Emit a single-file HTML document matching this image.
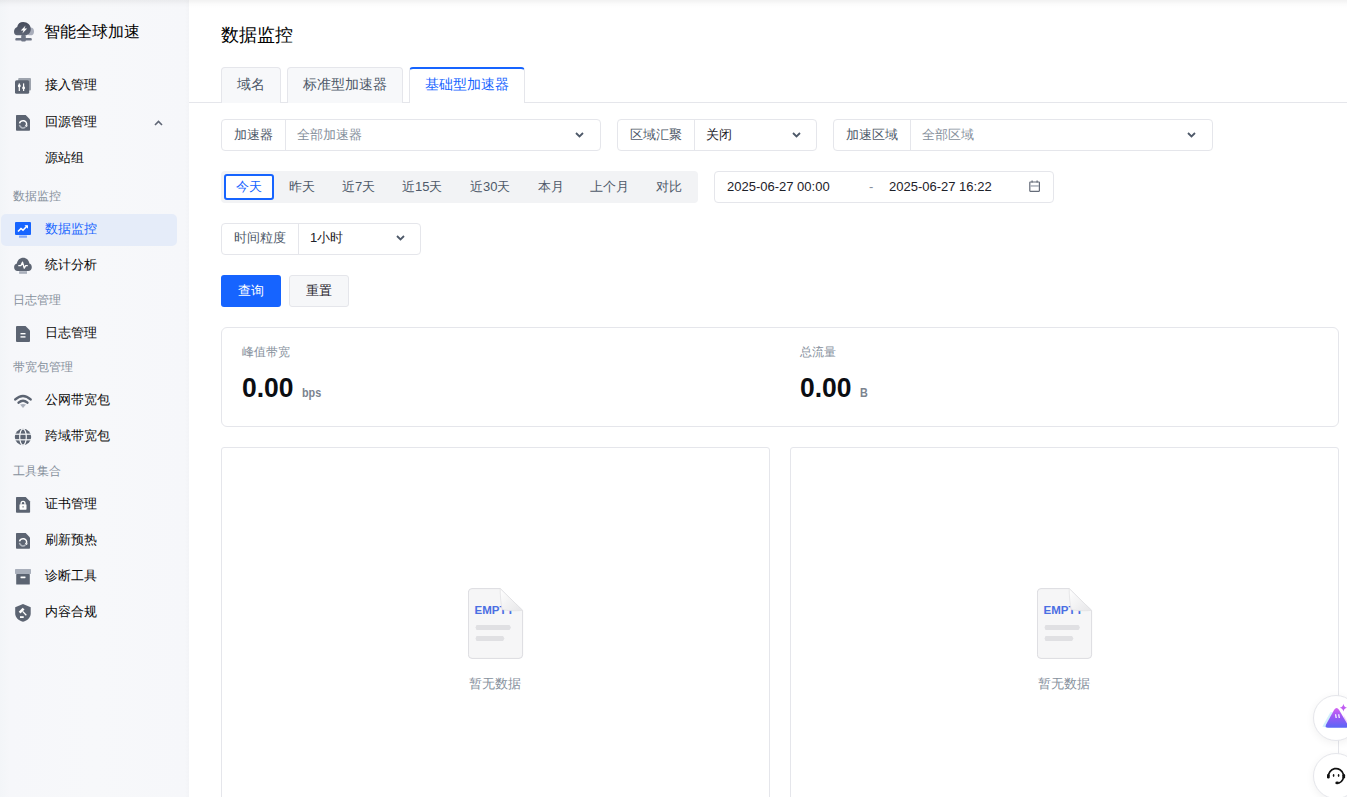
<!DOCTYPE html>
<html><head><meta charset="utf-8">
<style>
*{box-sizing:border-box;margin:0;padding:0}
html,body{width:1347px;height:797px;overflow:hidden;background:#fff}
body{position:relative;font-family:"Liberation Sans",sans-serif;color:#1d2129;font-size:14px}
.a{position:absolute;white-space:nowrap}
#side{position:absolute;left:0;top:0;width:189px;height:797px;background:linear-gradient(90deg,#f3f5f8 0,#f6f7fa 10px,#f7f8fa 50%,#f6f7fa 185px,#f3f4f7 189px)}
#topsh{position:absolute;left:0;top:0;width:1347px;height:8px;background:linear-gradient(rgba(0,0,0,.05) 0px,rgba(0,0,0,.035) 2px,rgba(0,0,0,.015) 4px,rgba(0,0,0,.006) 6px,rgba(0,0,0,0) 8px);z-index:5}
.ic{position:absolute}
.mi{position:absolute;left:45px;font-size:13px;line-height:20px;color:#0a0a0a}
.gl{position:absolute;left:13px;font-size:12px;line-height:16px;color:#86909c}
.box{position:absolute;border:1px solid #e5e6eb;border-radius:4px;background:#fff}
.lbl{position:absolute;top:0;bottom:0;border-right:1px solid #e5e6eb}
.t14{font-size:14px;line-height:20px}
.t13{font-size:13px;line-height:20px}
.chev{position:absolute;width:9px;height:6px}
.card{position:absolute;border:1px solid #e5e6eb;border-radius:4px;background:#fff}
</style></head><body>
<div id="side">
  <!-- logo -->
  <svg class="ic" style="left:10px;top:18px" width="28" height="28" viewBox="10 18 28 28">
    <defs><linearGradient id="lg1" x1="0" y1="0" x2="0" y2="1"><stop offset="0" stop-color="#464c5b"/><stop offset="1" stop-color="#5f6676"/></linearGradient></defs>
    <ellipse cx="30.4" cy="31.4" rx="3.6" ry="3.9" fill="#a9aebb"/>
    <path d="M17 35.3 C15.2 35.3 14 33.8 14 31.8 C14 29.6 15.2 27.6 17.2 27 C17.6 23.8 20 21.9 23.2 21.9 C27.5 21.9 30.8 24.8 30.8 29 C30.8 32.6 28.5 35.3 25.2 35.3 Z" fill="url(#lg1)"/>
    <path d="M25.6 25.5 L20.8 30.5 L23.5 30.5 L22.4 33.5 L27.1 28.4 L24.4 28.4 Z" fill="#fff"/>
    <rect x="15.3" y="38.1" width="16.5" height="2.5" rx="1.2" fill="#6e7585"/>
    <rect x="21.2" y="35" width="4.6" height="6.6" rx="1" fill="#6e7585"/>
  </svg>
  <div class="a" style="left:44px;top:21px;font-size:16px;line-height:22px;color:#000">智能全球加速</div>

  <!-- 接入管理 -->
  <svg class="ic" style="left:14px;top:77px" width="18" height="18" viewBox="14 77 18 18">
    <rect x="18.2" y="78" width="12.8" height="12.6" rx="1" fill="#9ea4ae"/>
    <rect x="15" y="80.2" width="14.2" height="13.6" rx="1.6" fill="#5c6472"/>
    <rect x="18.7" y="83.4" width="1.2" height="7.6" fill="#fff"/><rect x="17.9" y="84.6" width="2.8" height="2.6" rx="1.2" fill="#fff"/>
    <rect x="23" y="83.4" width="1.2" height="7.6" fill="#fff"/><rect x="22.2" y="86.6" width="2.8" height="2.6" rx="1.2" fill="#fff"/>
  </svg>
  <div class="mi" style="top:75px">接入管理</div>

  <!-- 回源管理 -->
  <svg class="ic" style="left:10px;top:108px" width="26" height="26" viewBox="10 108 26 26">
    <path d="M16.8 115 H25.7 L30 119.4 V130 a0.8 0.8 0 0 1 -0.8 0.8 H16.8 a0.8 0.8 0 0 1 -0.8 -0.8 V115.8 a0.8 0.8 0 0 1 0.8 -0.8Z" fill="#5c6472"/>
    <path d="M19.52 123.37 A3.6 3.6 0 0 1 26.48 125.23" stroke="#fff" stroke-width="1.5" fill="none"/>
    <path d="M28.02 125.65 L25.96 127.16 L24.93 124.82Z" fill="#fff"/>
    <path d="M19.45 124.93 A3.6 3.6 0 0 0 25.31 127.06" stroke="#b3b8c1" stroke-width="1.5" fill="none"/>
  </svg>
  <div class="mi" style="top:112px">回源管理</div>
  <svg class="ic" style="left:154px;top:120px" width="9" height="6" viewBox="0 0 9 6"><path d="M1 5 L4.5 1.5 L8 5" stroke="#5f6675" stroke-width="1.6" fill="none"/></svg>
  <div class="mi" style="top:148px">源站组</div>

  <div class="gl" style="top:188px">数据监控</div>
  <div class="a" style="left:1px;top:214px;width:176px;height:32px;border-radius:5px;background:#e5ecf9"></div>
  <svg class="ic" style="left:15px;top:222px" width="17" height="16" viewBox="0 0 17 16">
    <rect x="0" y="0" width="16" height="13" rx="1" fill="#1664ff"/>
    <rect x="4" y="13.4" width="8" height="2.4" rx="0.5" fill="#7fa6fb"/>
    <path d="M3 9.5 L6 6.5 L8 8.2 L12 4" stroke="#fff" stroke-width="1.6" fill="none"/>
    <path d="M9.5 3.2 H13 V6.7Z" fill="#fff"/>
  </svg>
  <div class="mi" style="top:219px;color:#1664ff">数据监控</div>

  <svg class="ic" style="left:10px;top:252px" width="26" height="26" viewBox="10 252 26 26">
    <path d="M17.5 270.9 C15.5 270.9 14.1 269.3 14.1 267.2 C14.1 265.3 15.3 263.8 16.9 263.5 C17.3 260.1 20 257.7 23.2 257.7 C26.4 257.7 29 260.1 29.4 263.5 C30.9 263.9 31.8 265.4 31.8 267.2 C31.8 269.3 30.3 270.9 28.3 270.9 Z" fill="#5c6472"/>
    <path d="M18.3 265.6 H21 L22.5 262.2 L24.3 268.2 L25.6 265.6 H27.8" stroke="#fff" stroke-width="1.3" stroke-linejoin="round" fill="none"/>
    <rect x="19.1" y="271.2" width="7.9" height="2.6" fill="#a9afbb"/>
  </svg>
  <div class="mi" style="top:255px">统计分析</div>

  <div class="gl" style="top:292px">日志管理</div>
  <svg class="ic" style="left:16px;top:326px" width="15" height="16" viewBox="0 0 15 16">
    <path d="M1 0 H9.5 L14 4.5 V15 a1 1 0 0 1 -1 1 H1 a1 1 0 0 1 -1 -1 V1 a1 1 0 0 1 1 -1Z" fill="#5c6472"/>
    <rect x="4.5" y="7" width="5" height="1.4" fill="#fff"/><rect x="4.5" y="10.2" width="5" height="1.4" fill="#fff"/>
  </svg>
  <div class="mi" style="top:323px">日志管理</div>

  <div class="gl" style="top:359px">带宽包管理</div>
  <svg class="ic" style="left:10px;top:388px" width="26" height="26" viewBox="10 388 26 26">
    <path d="M15.3 399.4 Q23 392.6 30.6 399.4" stroke="#5c6472" stroke-width="2.6" fill="none" stroke-linecap="round"/>
    <path d="M18.6 402.6 Q23 398.8 27.4 402.6" stroke="#5c6472" stroke-width="2.5" fill="none" stroke-linecap="round"/>
    <path d="M20.1 404.6 Q23 403.2 26 404.6 L23 408.1 Z" fill="#a9afbb"/>
  </svg>
  <div class="mi" style="top:390px">公网带宽包</div>

  <svg class="ic" style="left:14px;top:428px" width="18" height="18" viewBox="0 0 18 18">
    <circle cx="9" cy="9" r="8.2" fill="#5c6472"/>
    <ellipse cx="9" cy="9" rx="3.3" ry="8.2" fill="none" stroke="#f6f7f9" stroke-width="1.2"/>
    <rect x="0" y="5.6" width="18" height="1.2" fill="#f6f7f9"/><rect x="0" y="11.2" width="18" height="1.2" fill="#f6f7f9"/>
  </svg>
  <div class="mi" style="top:426px">跨域带宽包</div>

  <div class="gl" style="top:463px">工具集合</div>
  <svg class="ic" style="left:10px;top:490px" width="26" height="26" viewBox="10 490 26 26">
    <path d="M16.8 497 H25.7 L30.1 501.4 V511.9 a0.8 0.8 0 0 1 -0.8 0.8 H16.8 a0.8 0.8 0 0 1 -0.8 -0.8 V497.8 a0.8 0.8 0 0 1 0.8 -0.8Z" fill="#5c6472"/>
    <rect x="19.5" y="504.3" width="7" height="5.4" rx="0.6" fill="#fff"/>
    <path d="M21.1 504.6 V503.4 A1.95 1.95 0 0 1 25 503.4 V504.6" stroke="#fff" stroke-width="1.3" fill="none"/>
    <rect x="22.6" y="506" width="0.9" height="1.6" fill="#5c6472"/>
  </svg>
  <div class="mi" style="top:494px">证书管理</div>

  <svg class="ic" style="left:10px;top:526px" width="26" height="26" viewBox="10 108 26 26">
    <path d="M16.8 115 H25.7 L30 119.4 V130 a0.8 0.8 0 0 1 -0.8 0.8 H16.8 a0.8 0.8 0 0 1 -0.8 -0.8 V115.8 a0.8 0.8 0 0 1 0.8 -0.8Z" fill="#5c6472"/>
    <path d="M19.52 123.37 A3.6 3.6 0 0 1 26.48 125.23" stroke="#fff" stroke-width="1.5" fill="none"/>
    <path d="M28.02 125.65 L25.96 127.16 L24.93 124.82Z" fill="#fff"/>
    <path d="M19.45 124.93 A3.6 3.6 0 0 0 25.31 127.06" stroke="#b3b8c1" stroke-width="1.5" fill="none"/>
  </svg>
  <div class="mi" style="top:530px">刷新预热</div>

  <svg class="ic" style="left:15px;top:569px" width="17" height="16" viewBox="0 0 17 16">
    <rect x="0" y="0" width="16" height="4.9" rx="0.6" fill="#a9afbb"/>
    <rect x="1.2" y="5.1" width="13.6" height="10.5" rx="0.6" fill="#5c6472"/>
    <rect x="5.5" y="7.4" width="5" height="1.8" rx="0.4" fill="#fff"/>
  </svg>
  <div class="mi" style="top:566px">诊断工具</div>

  <svg class="ic" style="left:10px;top:600px" width="26" height="26" viewBox="10 600 26 26">
    <path d="M23 604.1 L30.7 607.2 V613.5 C30.7 617.5 27.5 620.5 23 621.7 C18.5 620.5 15.2 617.5 15.2 613.5 V607.2 Z" fill="#5c6472"/>
    <path d="M19.6 612.6 L23.6 608.6" stroke="#fff" stroke-width="2.6" fill="none"/>
    <path d="M22.6 611.4 L26.3 615.2" stroke="#fff" stroke-width="1.3" fill="none"/>
    <rect x="20" y="616.2" width="3.7" height="1.8" fill="#fff"/>
  </svg>
  <div class="mi" style="top:602px">内容合规</div>
</div>
<div id="topsh"></div>

<!-- main -->
<div class="a" style="left:221px;top:22px;font-size:18px;line-height:26px;color:#000">数据监控</div>

<!-- tabs -->
<div class="a" style="left:189px;top:102px;width:1158px;height:1px;background:#e5e6eb"></div>
<div class="a" style="left:221px;top:67px;width:60px;height:36px;background:#f7f8fa;border:1px solid #e5e6eb;border-bottom:none;border-radius:4px 4px 0 0"></div>
<div class="a t14" style="left:237px;top:74px;color:#4e5969">域名</div>
<div class="a" style="left:287px;top:67px;width:116px;height:36px;background:#f7f8fa;border:1px solid #e5e6eb;border-bottom:none;border-radius:4px 4px 0 0"></div>
<div class="a t14" style="left:303px;top:74px;color:#4e5969">标准型加速器</div>
<div class="a" style="left:409px;top:67px;width:116px;height:36px;background:#fff;border:1px solid #e5e6eb;border-top:2px solid #1664ff;border-bottom:none;border-radius:4px 4px 0 0"></div>
<div class="a t14" style="left:425px;top:74px;color:#1664ff">基础型加速器</div>

<!-- selectors row -->
<div class="box" style="left:221px;top:119px;width:380px;height:32px">
  <div class="lbl" style="left:0;width:64px"></div>
</div>
<div class="a t13" style="left:234px;top:125px;color:#4e5969">加速器</div>
<div class="a t13" style="left:297px;top:125px;color:#86909c">全部加速器</div>
<svg class="chev" style="left:575px;top:132px" viewBox="0 0 9 6"><path d="M1 1 L4.5 4.5 L8 1" stroke="#4e5969" stroke-width="1.8" fill="none"/></svg>

<div class="box" style="left:617px;top:119px;width:200px;height:32px">
  <div class="lbl" style="left:0;width:77px"></div>
</div>
<div class="a t13" style="left:630px;top:125px;color:#4e5969">区域汇聚</div>
<div class="a t13" style="left:706px;top:125px;color:#1d2129">关闭</div>
<svg class="chev" style="left:792px;top:132px" viewBox="0 0 9 6"><path d="M1 1 L4.5 4.5 L8 1" stroke="#4e5969" stroke-width="1.8" fill="none"/></svg>

<div class="box" style="left:833px;top:119px;width:380px;height:32px">
  <div class="lbl" style="left:0;width:77px"></div>
</div>
<div class="a t13" style="left:846px;top:125px;color:#4e5969">加速区域</div>
<div class="a t13" style="left:922px;top:125px;color:#86909c">全部区域</div>
<svg class="chev" style="left:1187px;top:132px" viewBox="0 0 9 6"><path d="M1 1 L4.5 4.5 L8 1" stroke="#4e5969" stroke-width="1.8" fill="none"/></svg>

<!-- time buttons -->
<div class="a" style="left:221px;top:171px;width:477px;height:32px;background:#f2f3f5;border-radius:4px"></div>
<div class="a" style="left:224px;top:174px;width:50px;height:26px;background:#fff;border:2px solid #1664ff;border-radius:3px"></div>
<div class="a t13" style="left:236px;top:177px;color:#1664ff">今天</div>
<div class="a t13" style="left:289px;top:177px;color:#4e5969">昨天</div>
<div class="a t13" style="left:342px;top:177px;color:#4e5969">近7天</div>
<div class="a t13" style="left:402px;top:177px;color:#4e5969">近15天</div>
<div class="a t13" style="left:470px;top:177px;color:#4e5969">近30天</div>
<div class="a t13" style="left:538px;top:177px;color:#4e5969">本月</div>
<div class="a t13" style="left:590px;top:177px;color:#4e5969">上个月</div>
<div class="a t13" style="left:656px;top:177px;color:#4e5969">对比</div>

<!-- date range -->
<div class="box" style="left:714px;top:171px;width:340px;height:32px"></div>
<div class="a" style="left:727px;top:178px;font-size:13px;line-height:17px;color:#1d2129">2025-06-27 00:00</div>
<div class="a" style="left:869px;top:178px;font-size:13px;line-height:17px;color:#86909c">-</div>
<div class="a" style="left:889px;top:178px;font-size:13px;line-height:17px;color:#1d2129">2025-06-27 16:22</div>
<svg class="ic" style="left:1026px;top:178px" width="17" height="17" viewBox="1026 178 17 17"><rect x="1029.8" y="182" width="9.6" height="9.3" rx="0.5" fill="none" stroke="#656c79" stroke-width="1.2"/><rect x="1030.2" y="185.2" width="8.8" height="1.5" fill="#a9aeb8"/><path d="M1032.1 180.6 V182.6 M1037.1 180.6 V182.6" stroke="#656c79" stroke-width="1.2"/></svg>

<!-- granularity -->
<div class="box" style="left:221px;top:223px;width:200px;height:32px">
  <div class="lbl" style="left:0;width:77px"></div>
</div>
<div class="a t13" style="left:234px;top:228px;color:#4e5969">时间粒度</div>
<div class="a t13" style="left:310px;top:228px;color:#1d2129">1小时</div>
<svg class="chev" style="left:396px;top:235px" viewBox="0 0 9 6"><path d="M1 1 L4.5 4.5 L8 1" stroke="#4e5969" stroke-width="1.8" fill="none"/></svg>

<!-- buttons -->
<div class="a" style="left:221px;top:275px;width:60px;height:32px;background:#1664ff;border-radius:3px"></div>
<div class="a t13" style="left:238px;top:281px;color:#fff">查询</div>
<div class="a" style="left:289px;top:275px;width:60px;height:32px;background:#f6f7f9;border:1px solid #e5e6eb;border-radius:3px"></div>
<div class="a t13" style="left:306px;top:281px;color:#1d2129">重置</div>

<!-- stat card -->
<div class="card" style="left:221px;top:327px;width:1118px;height:100px;border-radius:6px"></div>
<div class="a" style="left:242px;top:344px;font-size:12px;line-height:16px;color:#86909c">峰值带宽</div>
<div class="a" style="left:242px;top:372px;font-size:28px;line-height:32px;font-weight:bold;color:#0b0d12;transform:scaleX(.945);transform-origin:0 0">0.00</div><div class="a" style="left:302px;top:385px;font-size:12px;line-height:16px;font-weight:bold;color:#7b838f;transform:scaleX(.9);transform-origin:0 0">bps</div>
<div class="a" style="left:800px;top:344px;font-size:12px;line-height:16px;color:#86909c">总流量</div>
<div class="a" style="left:800px;top:372px;font-size:28px;line-height:32px;font-weight:bold;color:#0b0d12;transform:scaleX(.945);transform-origin:0 0">0.00</div><div class="a" style="left:860px;top:385px;font-size:12px;line-height:16px;font-weight:bold;color:#7b838f;transform:scaleX(.9);transform-origin:0 0">B</div>

<!-- chart cards -->
<div class="card" style="left:221px;top:447px;width:549px;height:400px;border-radius:3px"></div>
<div class="card" style="left:790px;top:447px;width:549px;height:400px;border-radius:3px"></div>

<!-- empty states -->
<svg class="ic" style="left:468px;top:588px" width="57" height="73" viewBox="0 0 57 73">
  <defs><linearGradient id="fold1" x1="0" y1="0" x2="1" y2="1"><stop offset="0" stop-color="#ffffff"/><stop offset="1" stop-color="#e6e6e8"/></linearGradient></defs>
  <path d="M4 0.6 H32.2 L54.6 22.4 V66.8 a3.6 3.6 0 0 1 -3.6 3.6 H4 a3.6 3.6 0 0 1 -3.6 -3.6 V4 a3.6 3.6 0 0 1 3.6 -3.4Z" fill="#f6f6f7" stroke="#dcdce0" stroke-width="1"/>
  <text x="6.5" y="26" font-family="Liberation Sans" font-weight="bold" font-size="11.5" fill="#4a6fe3">EMPTY</text>
  <path d="M32.2 0.6 L54.6 22.4 C47 23 39 23 34.2 21.4 C32.7 14.5 32.2 7.5 32.2 0.6Z" fill="url(#fold1)" stroke="#e2e2e5" stroke-width="0.8"/>
  <path d="M8.5 37 H41.5 L43 39.5 L41.5 42 H8.5 L7.5 39.5Z" fill="#e0e0e3"/>
  <path d="M8.5 48 H35 L36.5 50.5 L35 53 H8.5 L7.5 50.5Z" fill="#e0e0e3"/>
</svg>
<div class="a" style="left:469px;top:675px;font-size:13px;line-height:18px;color:#86909c">暂无数据</div>
<svg class="ic" style="left:1037px;top:588px" width="57" height="73" viewBox="0 0 57 73">
  <defs><linearGradient id="fold2" x1="0" y1="0" x2="1" y2="1"><stop offset="0" stop-color="#ffffff"/><stop offset="1" stop-color="#e6e6e8"/></linearGradient></defs>
  <path d="M4 0.6 H32.2 L54.6 22.4 V66.8 a3.6 3.6 0 0 1 -3.6 3.6 H4 a3.6 3.6 0 0 1 -3.6 -3.6 V4 a3.6 3.6 0 0 1 3.6 -3.4Z" fill="#f6f6f7" stroke="#dcdce0" stroke-width="1"/>
  <text x="6.5" y="26" font-family="Liberation Sans" font-weight="bold" font-size="11.5" fill="#4a6fe3">EMPTY</text>
  <path d="M32.2 0.6 L54.6 22.4 C47 23 39 23 34.2 21.4 C32.7 14.5 32.2 7.5 32.2 0.6Z" fill="url(#fold2)" stroke="#e2e2e5" stroke-width="0.8"/>
  <path d="M8.5 37 H41.5 L43 39.5 L41.5 42 H8.5 L7.5 39.5Z" fill="#e0e0e3"/>
  <path d="M8.5 48 H35 L36.5 50.5 L35 53 H8.5 L7.5 50.5Z" fill="#e0e0e3"/>
</svg>
<div class="a" style="left:1038px;top:675px;font-size:13px;line-height:18px;color:#86909c">暂无数据</div>
<!-- floating buttons -->
<div class="a" style="left:1313px;top:695px;width:46px;height:46px;border-radius:50%;background:#fff;border:1px solid #e5e6eb;box-shadow:0 2px 8px rgba(0,0,0,0.06)"></div>
<svg class="ic" style="left:1320px;top:702px" width="27" height="28" viewBox="1320 702 27 28">
  <defs><linearGradient id="mt" x1="0" y1="0" x2="0" y2="1"><stop offset="0" stop-color="#d464f2"/><stop offset=".45" stop-color="#9a58f5"/><stop offset="1" stop-color="#5a66f5"/></linearGradient></defs>
  <path d="M1322.4 726.4 L1330.6 712 L1333.4 712.5 L1326 727.6Z" fill="#c6ebfb" opacity=".8"/>
  <path d="M1343.5 715 L1350 726 L1345 727Z" fill="#f0c8f8" opacity=".8"/>
  <path d="M1326.1 724.6 L1334.2 709.8 Q1336.6 706.2 1339 709.8 L1347.6 724.6 Q1349 727.7 1345.6 727.7 H1328.1 Q1324.7 727.7 1326.1 724.6Z" fill="url(#mt)"/>
  <path d="M1335 714.3 H1336.2 L1336.8 717.9 H1335.6Z" fill="#fff"/><path d="M1338.1 714.3 H1339.3 L1339.9 717.9 H1338.7Z" fill="#fff"/>
  <path d="M1343.4 703.8 Q1343.9 707.2 1347 707.7 Q1343.9 708.2 1343.4 711.6 Q1342.9 708.2 1339.8 707.7 Q1342.9 707.2 1343.4 703.8Z" fill="#c05cf2"/>
</svg>
<div class="a" style="left:1313px;top:753px;width:46px;height:46px;border-radius:50%;background:#fff;border:1px solid #e5e6eb;box-shadow:0 2px 8px rgba(0,0,0,0.06)"></div>
<svg class="ic" style="left:1324px;top:764px" width="23" height="22" viewBox="1324 764 23 22">
  <path d="M1328.45 777 A7.6 7.6 0 1 1 1338.6 783.3" stroke="#111" stroke-width="1.7" fill="none"/>
  <rect x="1327" y="774" width="2.7" height="4.4" rx="1.2" fill="#111"/>
  <rect x="1342.4" y="774" width="2.7" height="4.4" rx="1.2" fill="#111"/>
  <ellipse cx="1337.2" cy="782.9" rx="1.9" ry="1.4" fill="#111"/>
  <ellipse cx="1333.6" cy="775.5" rx=".8" ry="1.45" fill="#111"/>
  <ellipse cx="1338.6" cy="775.5" rx=".8" ry="1.45" fill="#111"/>
</svg>
</body></html>
